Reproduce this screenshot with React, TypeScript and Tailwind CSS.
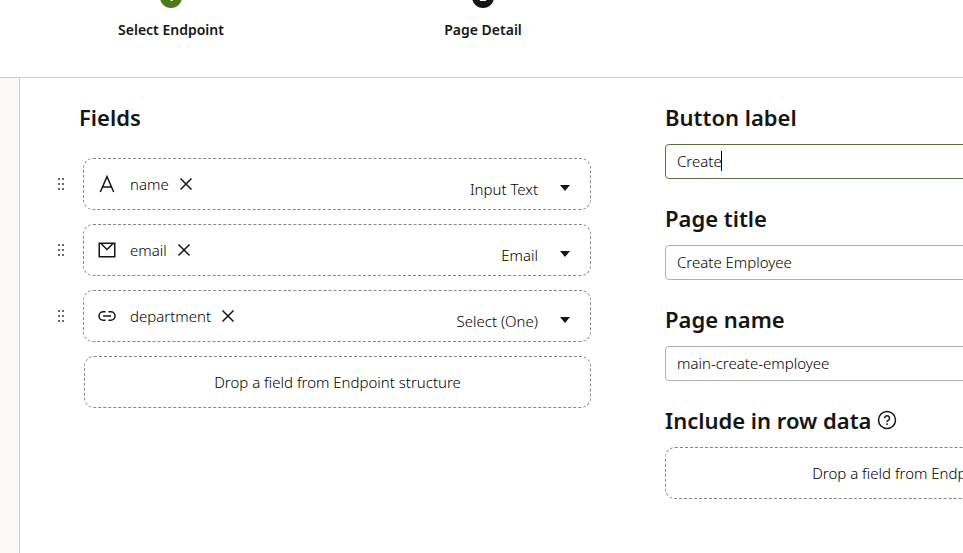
import { useState, type ReactNode } from "react";

type Field = { name: string; type: string; icon: ReactNode };

const types = ["Input Text", "Email", "Select (One)"];

function LetterIcon() {
  return (
    <svg className="size-5" viewBox="0 0 20 20" fill="none" stroke="currentColor" strokeWidth="1.5" aria-hidden="true">
      <path d="M3.300 18 10 2.600 16.700 18M5.600 13h8.800" />
    </svg>
  );
}

function MailIcon() {
  return (
    <svg className="size-5" viewBox="0 0 20 20" fill="none" stroke="currentColor" strokeWidth="1.5" aria-hidden="true">
      <path d="M2.250 3.250h15.500v13.500H2.250zM4 3.500l6 6 6-6" />
    </svg>
  );
}

function LinkIcon() {
  return (
    <svg className="size-5" viewBox="0 0 20 20" fill="none" stroke="currentColor" strokeWidth="1.5" aria-hidden="true">
      <path d="M8.600 5.800H6.200a4.200 4.200 0 0 0 0 8.400h2.400M11.400 5.800h2.400a4.200 4.200 0 0 1 0 8.400h-2.400M6 10h8" />
    </svg>
  );
}

const fields: Field[] = [
  { name: "name", type: "Input Text", icon: <LetterIcon /> },
  { name: "email", type: "Email", icon: <MailIcon /> },
  { name: "department", type: "Select (One)", icon: <LinkIcon /> },
];

function Step({ number, label, color }: { number: number; label: string; color: string }) {
  return (
    <li className="flex w-[312px] shrink-0 flex-col items-center gap-3">
      <span className={`flex size-[22px] items-center justify-center rounded-full text-xs font-bold text-white ${color}`}>
        {number}
      </span>
      <span className="text-sm leading-5 font-semibold">{label}</span>
    </li>
  );
}

function FieldRow({ field }: { field: Field }) {
  const [type, setType] = useState(field.type);
  return (
    <li className="flex items-center gap-[19px]">
      <button type="button" aria-label={`Move ${field.name}`} className="w-[6px] cursor-move">
        <svg className="h-3 w-[6px]" viewBox="0 0 6 12" fill="#6b6b6b" aria-hidden="true">
          <path d="M0 0h2v2H0zM4 0h2v2H4zM0 5h2v2H0zM4 5h2v2H4zM0 10h2v2H0zM4 10h2v2H4z" />
        </svg>
      </button>
      <div className="flex h-[52px] flex-1 items-center rounded-[10px] border border-dashed border-[#8b8580] pl-[13px]">
        {field.icon}
        <span className="ml-[13px] text-[15px] leading-6 font-light text-black">{field.name}</span>
        <button type="button" aria-label={`Remove ${field.name}`} className="ml-[7px]">
          <svg className="size-5" viewBox="0 0 20 20" fill="none" stroke="currentColor" strokeWidth="1.5" aria-hidden="true">
            <path d="m4.500 4.500 11 11M15.500 4.500l-11 11" />
          </svg>
        </button>
        <div className="relative mt-[10px] ml-auto">
          <select
            aria-label={`Type of ${field.name}`}
            value={type}
            onChange={(e) => setType(e.target.value)}
            className="w-40 appearance-none bg-transparent pr-[52px] text-right text-[15px] leading-6 font-light text-black outline-none [text-align-last:right]"
          >
            {types.map((t) => (
              <option key={t}>{t}</option>
            ))}
          </select>
          <svg className="pointer-events-none absolute top-2 right-5 h-[6px] w-[10px]" viewBox="0 0 10 6" fill="currentColor" aria-hidden="true">
            <path d="M0 0h10L5 6z" />
          </svg>
        </div>
      </div>
    </li>
  );
}

function TextField({ id, label, initial, active }: { id: string; label: string; initial: string; active?: boolean }) {
  const [value, setValue] = useState(initial);
  return (
    <div>
      <label htmlFor={id} className="block text-[22px] leading-[30px] font-semibold">
        {label}
      </label>
      <div className="relative mt-3">
        <input
          id={id}
          type="text"
          value={value}
          onChange={(e) => setValue(e.target.value)}
          className={`h-[35px] w-full rounded border bg-white px-[11px] pb-[2px] text-[15px] font-light text-black outline-none ${active ? "border-[#55723b]" : "border-[#b3b1af]"}`}
        />
        {active && <span className="absolute top-[7px] left-14 h-5 w-px bg-black" />}
      </div>
    </div>
  );
}

function DropZone() {
  return (
    <div className="flex h-[52px] items-center justify-center rounded-[10px] border border-dashed border-[#8b8580] text-[15px] font-light text-black">
      Drop a field from Endpoint structure
    </div>
  );
}

export default function App() {
  return (
    <div className="flex min-h-screen flex-col overflow-hidden bg-white font-['Noto_Sans',sans-serif] text-[#161513]">
      <header className="h-[78px] overflow-hidden border-b border-[#cfccc9]">
        <ol className="-mt-[14px] flex pl-[15px]">
          <Step number={1} label="Select Endpoint" color="bg-[#4c7a1b]" />
          <Step number={2} label="Page Detail" color="bg-[#161513]" />
        </ol>
      </header>
      <div className="flex flex-1">
        <aside className="w-5 shrink-0 border-r border-[#cfccc9] bg-[#faf9f8]" />
        <main className="flex flex-1 gap-[74px] pt-6 pl-[38px]">
          <section className="w-[533px] shrink-0">
            <h2 className="pl-[21px] text-[22px] leading-[30px] font-semibold">Fields</h2>
            <ul className="mt-[26px] flex flex-col gap-[14px]">
              {fields.map((f) => (
                <FieldRow key={f.name} field={f} />
              ))}
            </ul>
            <div className="mt-[14px] pl-[26px]">
              <DropZone />
            </div>
          </section>
          <section className="flex min-w-[541px] flex-1 flex-col gap-6">
            <TextField id="button-label" label="Button label" initial="Create" active />
            <TextField id="page-title" label="Page title" initial="Create Employee" />
            <TextField id="page-name" label="Page name" initial="main-create-employee" />
            <div>
              <div className="mb-3 flex items-center gap-[5px]">
                <h2 className="text-[22px] leading-[30px] font-semibold">Include in row data</h2>
                <button type="button" aria-label="Help">
                  <svg className="size-5" viewBox="0 0 20 20" fill="none" stroke="currentColor" strokeWidth="1.5" aria-hidden="true">
                    <circle cx="10" cy="10" r="8.500" />
                    <path d="M7.500 8.200a2.500 2.500 0 1 1 3.800 2.100c-.8.5-1.300.8-1.300 1.700" />
                    <path d="M10 13.300v1.700" />
                  </svg>
                </button>
              </div>
              <DropZone />
            </div>
          </section>
        </main>
      </div>
    </div>
  );
}
